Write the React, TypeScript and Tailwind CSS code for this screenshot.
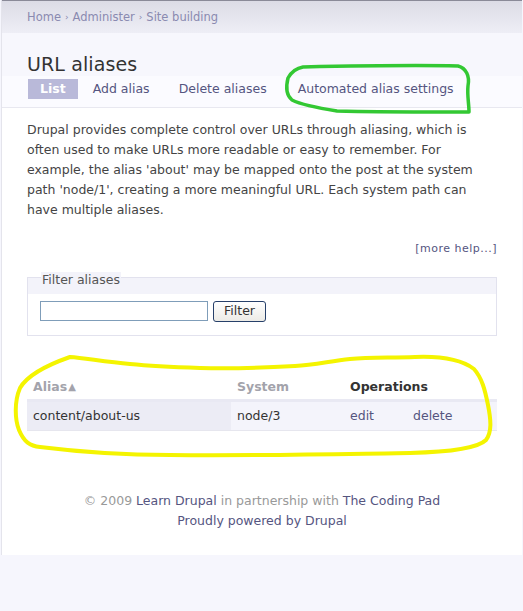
import React from 'react';

const font = { fontFamily: '"DejaVu Sans", Verdana, sans-serif' };

function Annotations() {
  return (
    <svg className="absolute inset-0 pointer-events-none" width={523} height={611} viewBox="0 0 523 611">
      <path
        d="M303 67 C350 66 420 65 458 66 C466 68 470 76 468 86 C467 95 469 104 469 112 C420 112 370 112 337 111 C318 108 300 104 292 100 C286 95 286 86 288 78 C292 71 297 68 303 67 Z"
        fill="none"
        stroke="#33c833"
        strokeWidth={3.5}
        strokeLinejoin="round"
      />
      <path
        d="M70 357 C50 364 28 374 20 388 C14 402 15 420 19 430 C24 442 30 446 40 447 C80 452 120 455 170 455 C260 456 340 454 410 453 C450 452 478 448 486 440 C492 432 491 420 488 405 C485 390 482 378 474 369 C462 360 440 356 415 357 C390 358 370 357 350 359 C330 361 315 365 295 366 C260 368 230 369 200 368 C170 367 150 366 130 364 C105 362 85 358 70 357 Z"
        fill="none"
        stroke="#f4f400"
        strokeWidth={4}
        strokeLinejoin="round"
      />
    </svg>
  );
}

export default function App() {
  return (
    <div className="relative w-[523px] h-[611px] overflow-hidden bg-[#f6f6fd]" style={font}>
      <div className="flex flex-col w-[521px] ml-[1px] border-l border-[#e4e4ec]">
        {/* breadcrumb band */}
        <div className="h-[33px] flex items-center pl-[25px] pt-[1px] text-[11.5px] text-[#8a8ab0] bg-gradient-to-b from-[#dcdce6] to-[#eeeef6] border-t border-[#8a8a98]">
          <span>Home</span>
          <span className="mx-[4px] text-[9px]">›</span>
          <span>Administer</span>
          <span className="mx-[4px] text-[9px]">›</span>
          <span>Site building</span>
        </div>

        {/* content */}
        <div className="bg-white">
          <div className="bg-[#f7f7fd] pt-[19px] px-[25px]">
            <h1 className="text-[19px] leading-[24px] text-[#333] tracking-[0.1px]">URL aliases</h1>
          </div>
          <div className="bg-[#fbfbff] px-[26px] pt-[3px] border-b border-[#e8e8f0] pb-[8px]">
            <ul className="flex items-center text-[12.5px] text-[#55557f]">
              <li className="bg-[#b9b9d9] text-white font-bold px-[12px] h-[20px] leading-[20px]">List</li>
              <li className="ml-[15px]">Add alias</li>
              <li className="ml-[29px]">Delete aliases</li>
              <li className="ml-[31px]">Automated alias settings</li>
            </ul>
          </div>

          <div className="px-[25px] pt-[12px]">
            <p className="text-[12.5px] leading-[20px] text-[#444] w-[472px]">
              Drupal provides complete control over URLs through aliasing, which is often used to make URLs more readable or easy to remember. For example, the alias 'about' may be mapped onto the post at the system path 'node/1', creating a more meaningful URL. Each system path can have multiple aliases.
            </p>
            <div className="text-right text-[11px] text-[#55557f] mt-[21px] pr-[1px] w-[471px] tracking-[0.5px]">[more help...]</div>

            <fieldset className="mt-[19px] border border-[#e2e2ee] w-[470px]">
              <div className="bg-[#f3f3fa] h-[16px] relative">
                <span className="absolute left-[13px] top-[-6px] text-[12.5px] text-[#555] bg-[#f3f3fa] px-[1px] leading-[16px]">Filter aliases</span>
              </div>
              <div className="flex items-center px-[12px] pt-[7px] pb-[13px]">
                <input className="w-[168px] h-[20px] border border-[#7f9db9] bg-white" />
                <button className="ml-[5px] w-[53px] h-[21px] rounded-[3px] border border-[#27406a] bg-gradient-to-b from-[#ffffff] to-[#ecebe6] text-[12.5px] text-[#333] leading-[16px]">
                  Filter
                </button>
              </div>
            </fieldset>

            <table className="mt-[40px] w-[470px] text-[12.5px] border-collapse">
              <thead>
                <tr className="border-b-[3px] border-[#e9e9f3] h-[25px] text-left">
                  <th className="w-[204px] pl-[6px] font-bold text-[#a3a3ab]">
                    Alias<span className="inline-block ml-[1px] text-[10px] align-[1px]">▲</span>
                  </th>
                  <th className="w-[112px] pl-[6px] font-bold text-[#a3a3ab]">System</th>
                  <th colSpan={2} className="pl-[7px] font-bold text-[#333]">Operations</th>
                </tr>
              </thead>
              <tbody>
                <tr className="h-[30px] border-b border-[#e6e6ee] bg-[#f4f4fb]">
                  <td className="pl-[6px] bg-[#ececf5] text-[#333]">content/about-us</td>
                  <td className="pl-[6px] text-[#333]">node/3</td>
                  <td className="pl-[7px] w-[69px] text-[#55557f]">edit</td>
                  <td className="pl-[1px] text-[#55557f]">delete</td>
                </tr>
              </tbody>
            </table>
          </div>

          <div className="text-center text-[12.5px] leading-[20px] text-[#999] pt-[60px] pb-[24px]">
            <div>
              © 2009 <span className="text-[#55557f]">Learn Drupal</span> in partnership with{' '}
              <span className="text-[#55557f]">The Coding Pad</span>
            </div>
            <div className="text-[#55557f]">Proudly powered by Drupal</div>
          </div>
        </div>
      </div>
      <Annotations />
    </div>
  );
}
